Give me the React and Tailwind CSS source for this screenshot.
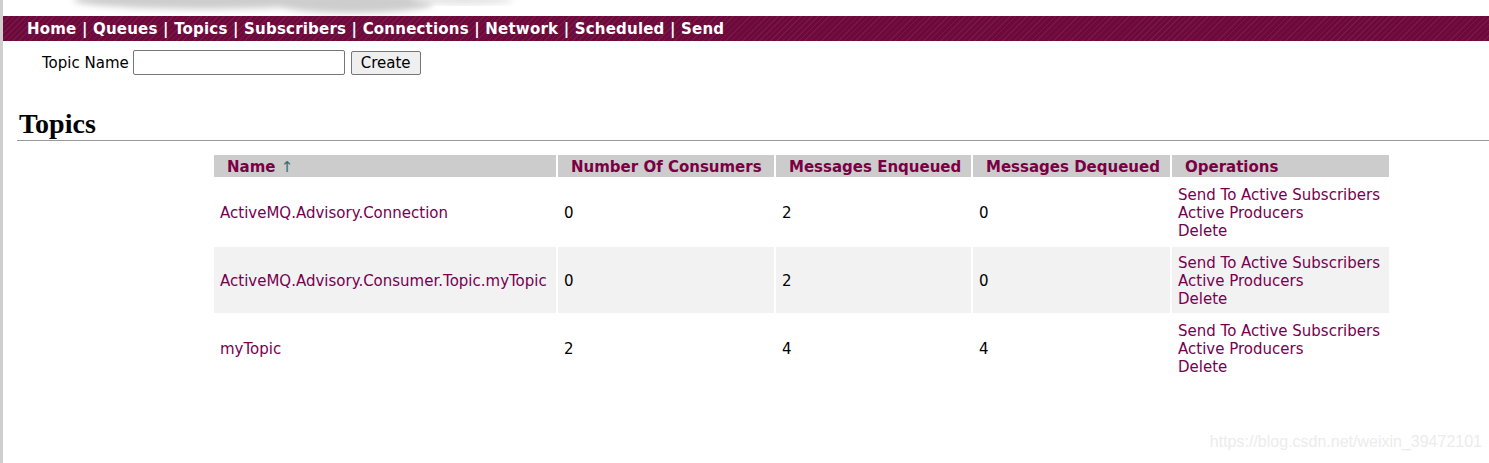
import React from "react";

const rows = [
  { name: "ActiveMQ.Advisory.Connection", c: "0", e: "2", d: "0", bg: "bg-white" },
  { name: "ActiveMQ.Advisory.Consumer.Topic.myTopic", c: "0", e: "2", d: "0", bg: "bg-[#f2f2f2]" },
  { name: "myTopic", c: "2", e: "4", d: "4", bg: "bg-white" },
];

const navItems = ["Home", "Queues", "Topics", "Subscribers", "Connections", "Network", "Scheduled", "Send"];

export default function App() {
  return (
    <div className="w-[1489px] h-[463px] bg-white flex overflow-hidden font-['DejaVu_Sans',Verdana,sans-serif] text-black">
      <div className="w-[3px] h-full bg-[#cfcfcf] shrink-0" />
      <div className="flex-1 flex flex-col relative">
        <div className="h-[16px] relative overflow-hidden">
          <svg width="1486" height="16" className="absolute left-0 top-0">
            <defs>
              <filter id="b"><feGaussianBlur stdDeviation="3" /></filter>
            </defs>
            <g filter="url(#b)" fill="#cdcdcd">
              <ellipse cx="200" cy="0" rx="130" ry="9" />
              <ellipse cx="350" cy="3" rx="80" ry="10" />
            </g>
            <g filter="url(#b)" fill="#e4e4e4">
              <ellipse cx="460" cy="0" rx="50" ry="5" />
            </g>
          </svg>
        </div>
        <div
          className="h-[25px] flex items-center pl-[24px] pt-[2px] text-white font-bold text-[15px] tracking-[0.2px] bg-[#6e0a3b]"
          style={{
            backgroundImage:
              "repeating-linear-gradient(135deg, rgba(255,255,255,0.06) 0px, rgba(255,255,255,0.06) 1px, transparent 1px, transparent 4px)",
          }}
        >
          {navItems.map((n, i) => (
            <span key={n} className="whitespace-pre">
              {n}
              {i < navItems.length - 1 ? " | " : ""}
            </span>
          ))}
        </div>
        <div className="flex items-center pl-[39px] pt-[9px] text-[15px]">
          <span className="mr-[4px] pt-[2px]">Topic Name</span>
          <input className="w-[212px] h-[25px] border border-[#767676] rounded-[2px] bg-white" />
          <button className="ml-[6px] h-[24px] px-[9px] pt-[1px] border border-[#767676] rounded-[2px] bg-[#efefef] text-[15px] leading-none">
            Create
          </button>
        </div>
        <div className="mt-[35px] ml-[14px] border-b border-[#999] pb-[2px]">
          <h2 className="font-['Liberation_Serif','Times_New_Roman',serif] font-bold text-[28px] leading-[28px] pl-[2px]">
            Topics
          </h2>
        </div>
        <div className="pl-[211px] pt-[14px]">
          <table className="border-separate border-spacing-[2px] -m-[2px] text-[15px]">
            <thead>
              <tr className="text-[#7a0045] font-bold">
                <th className="w-[342px] h-[22px] leading-[20px] pt-[2px] bg-[#cccccc] text-left pl-[13px] font-bold">
                  Name <span className="text-[#336b6b] font-normal">↑</span>
                </th>
                <th className="w-[216px] leading-[20px] pt-[2px] bg-[#cccccc] text-left pl-[13px] font-bold">Number Of Consumers</th>
                <th className="w-[195px] leading-[20px] pt-[2px] bg-[#cccccc] text-left pl-[13px] font-bold">Messages Enqueued</th>
                <th className="w-[197px] leading-[20px] pt-[2px] bg-[#cccccc] text-left pl-[13px] font-bold">Messages Dequeued</th>
                <th className="w-[217px] leading-[20px] pt-[2px] bg-[#cccccc] text-left pl-[13px] font-bold">Operations</th>
              </tr>
            </thead>
            <tbody>
              {rows.map((r) => (
                <tr key={r.name} className={r.bg}>
                  <td className="h-[66px] pl-[6px] pt-[2px] text-[#770050] whitespace-nowrap">{r.name}</td>
                  <td className="pl-[6px] pt-[2px]">{r.c}</td>
                  <td className="pl-[6px] pt-[2px]">{r.e}</td>
                  <td className="pl-[6px] pt-[2px]">{r.d}</td>
                  <td className="pl-[6px] pt-[2px] text-[#770050] leading-[18px]">
                    <div>Send To Active Subscribers</div>
                    <div>Active Producers</div>
                    <div>Delete</div>
                  </td>
                </tr>
              ))}
            </tbody>
          </table>
        </div>
        <div className="absolute right-[7px] bottom-[9px] text-[16px] text-[#ececec] font-['Liberation_Sans',Arial,sans-serif]">
          https://blog.csdn.net/weixin_39472101
        </div>
      </div>
    </div>
  );
}
